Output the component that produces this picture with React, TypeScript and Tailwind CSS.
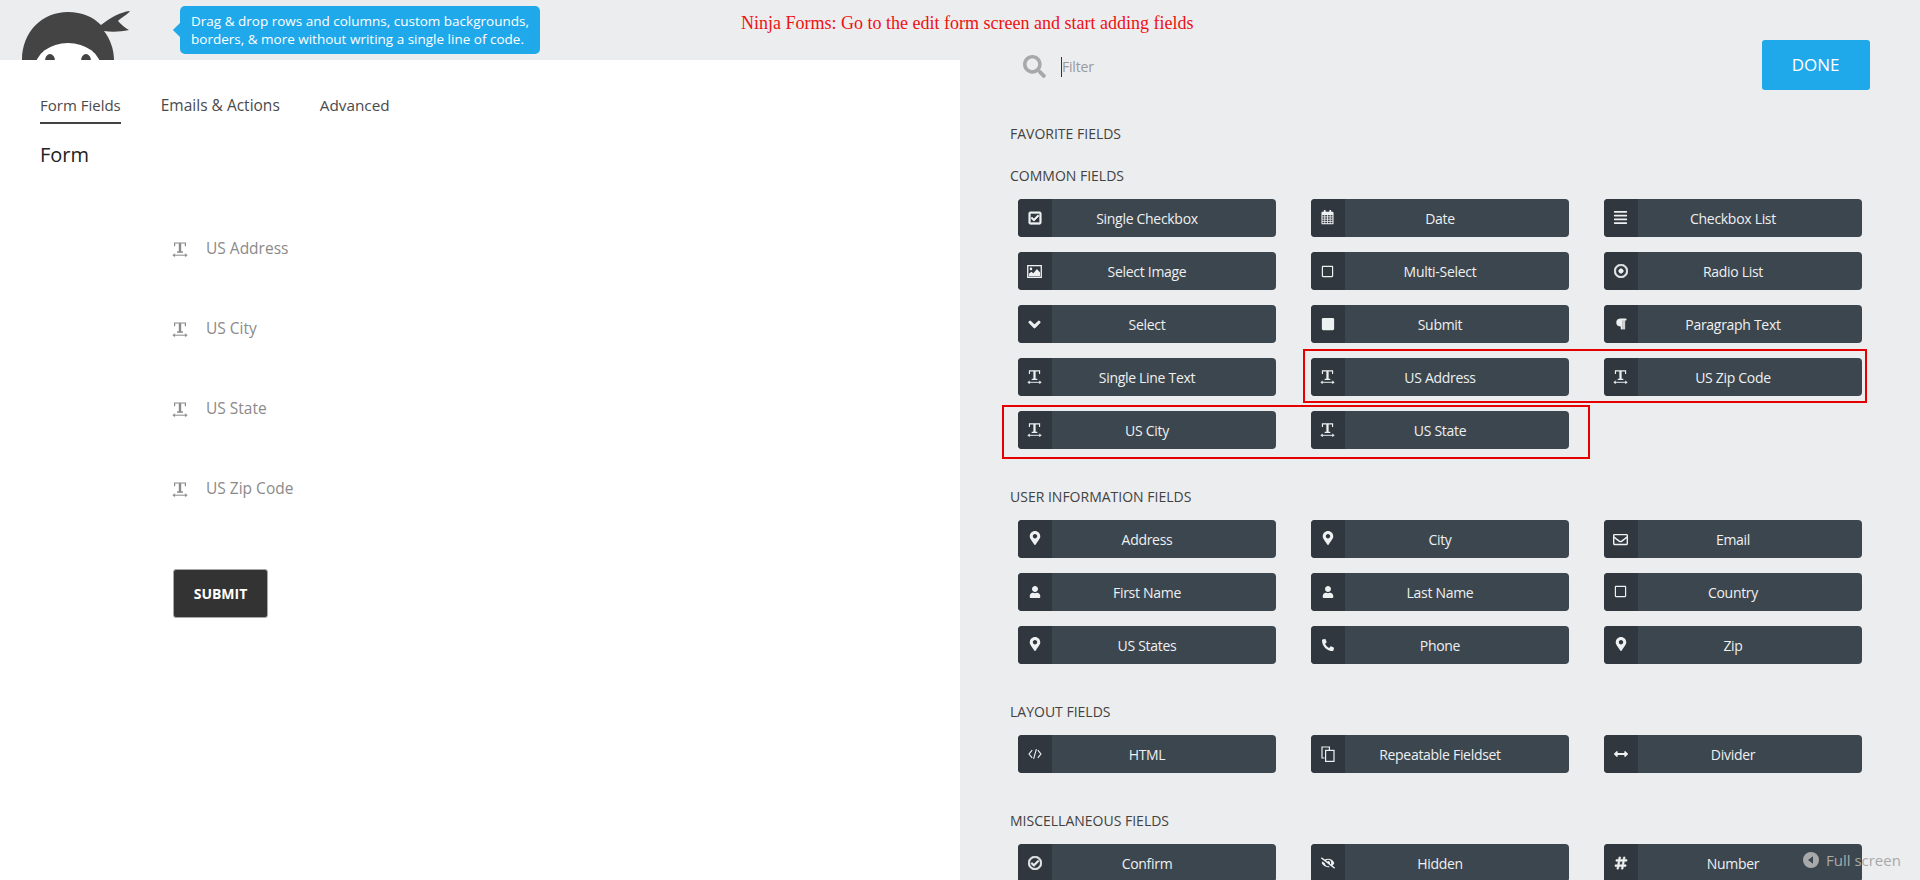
import React from "react";
import {
  FaRegCheckSquare, FaAlignJustify, FaRegSquare, FaRegDotCircle, FaChevronDown, FaSquare,
  FaParagraph, FaMapMarkerAlt, FaUser, FaPhone, FaRegEnvelope, FaArrowsAltH,
  FaRegCheckCircle, FaEyeSlash, FaHashtag, FaSearch,
} from "react-icons/fa";

function TextWidth({ className }: { className?: string }) {
  return (
    <svg viewBox="0 0 16 16" className={className} fill="none" stroke="currentColor">
      <path d="M2.6 5.2V2h10.8v3.2" strokeWidth="1.2" />
      <path d="M8 2v9.5" strokeWidth="2.4" />
      <path d="M5 11h6" strokeWidth="1.4" />
      <path d="M2 14.2h12" strokeWidth="1" />
      <path d="M0.6 14.2l2.2-1.7v3.4zM15.4 14.2l-2.2-1.7v3.4z" fill="currentColor" strokeWidth="0.3" />
    </svg>
  );
}

function Calendar({ className }: { className?: string }) {
  const cells: React.ReactNode[] = [];
  for (let r = 0; r < 4; r++) {
    for (let c = 0; c < 4; c++) {
      cells.push(<rect key={`${r}-${c}`} x={1.6 + c * 2.9} y={5.4 + r * 2.4} width="2" height="1.5" fill="#30373f" />);
    }
  }
  return (
    <svg viewBox="0 0 14 16" className={className} fill="currentColor">
      <rect x="3" y="0" width="2" height="3.4" rx="0.6" />
      <rect x="9" y="0" width="2" height="3.4" rx="0.6" />
      <rect x="0.5" y="1.8" width="13" height="13.6" rx="1" />
      {cells}
    </svg>
  );
}

function Picture({ className }: { className?: string }) {
  return (
    <svg viewBox="0 0 16 14" className={className}>
      <rect x="0.7" y="0.7" width="14.6" height="12.6" fill="none" stroke="currentColor" strokeWidth="1.4" />
      <circle cx="4.2" cy="4.2" r="1.4" fill="currentColor" />
      <path d="M2 12V9.4l2.6-2 2.2 1.6L10.6 4.4 14 8v4z" fill="currentColor" />
    </svg>
  );
}

function CodeIcon({ className }: { className?: string }) {
  return (
    <svg viewBox="0 0 16 16" className={className} fill="none" stroke="currentColor" strokeWidth="1.3">
      <path d="M4.8 3.6L1.2 8l3.6 4.4M11.2 3.6L14.8 8l-3.6 4.4M9.6 2.4L6.4 13.6" />
    </svg>
  );
}

function Files({ className }: { className?: string }) {
  return (
    <svg viewBox="0 0 14 16" className={className} fill="none" stroke="currentColor" strokeWidth="1.2">
      <path d="M3.6 12H1V1h7.4v3.4" />
      <rect x="4.6" y="4.4" width="8.4" height="11" />
    </svg>
  );
}

function BackCircle({ className }: { className?: string }) {
  return (
    <svg viewBox="0 0 16 16" className={className} fill="currentColor">
      <path fillRule="evenodd" d="M8 0a8 8 0 1 1 0 16A8 8 0 0 1 8 0zM10 4.2L5 8l5 3.8z" />
    </svg>
  );
}

type Item = [string, React.ComponentType<{ className?: string }>, string?];

const pin = "w-[14px] h-[14px] mb-[2px]";
const tw = "w-[15px] h-[15px] -mt-[1px]";

const common: Item[] = [
  ["Single Checkbox", FaRegCheckSquare, "w-[14px] h-[14px] stroke-[30] -mt-[1px]"],
  ["Date", Calendar, "w-[13px] h-[15px] -mt-[1px]"],
  ["Checkbox List", FaAlignJustify, "w-[15px] h-[15px] -mt-[1px]"],
  ["Select Image", Picture, "w-[15px] h-[13px]"],
  ["Multi-Select", FaRegSquare, "w-[13px] h-[13px]"],
  ["Radio List", FaRegDotCircle, "w-[14px] h-[14px] stroke-[30]"],
  ["Select", FaChevronDown, "w-[13px] h-[13px] stroke-[40]"],
  ["Submit", FaSquare],
  ["Paragraph Text", FaParagraph, "w-[12px] h-[12px] stroke-[20]"],
  ["Single Line Text", TextWidth, tw],
  ["US Address", TextWidth, tw],
  ["US Zip Code", TextWidth, tw],
  ["US City", TextWidth, tw],
  ["US State", TextWidth, tw],
];
const user: Item[] = [
  ["Address", FaMapMarkerAlt, pin],
  ["City", FaMapMarkerAlt, pin],
  ["Email", FaRegEnvelope, "w-[15px] h-[15px]"],
  ["First Name", FaUser, "w-[12px] h-[12px] -mt-[1px]"],
  ["Last Name", FaUser, "w-[12px] h-[12px] -mt-[1px]"],
  ["Country", FaRegSquare, "w-[13px] h-[13px] -mt-[1px]"],
  ["US States", FaMapMarkerAlt, pin],
  ["Phone", FaPhone, "w-[12px] h-[12px] -scale-x-100 -mt-[1px]"],
  ["Zip", FaMapMarkerAlt, pin],
];
const layout: Item[] = [
  ["HTML", CodeIcon],
  ["Repeatable Fieldset", Files, "w-[14px] h-[16px] -mt-[1px]"],
  ["Divider", FaArrowsAltH],
];
const misc: Item[] = [
  ["Confirm", FaRegCheckCircle, "w-[14px] h-[14px] stroke-[30]"],
  ["Hidden", FaEyeSlash],
  ["Number", FaHashtag, "w-[14px] h-[14px] stroke-[20]"],
];

function FieldButton({ item }: { item: Item }) {
  const [label, Icon, size] = item;
  return (
    <div className="flex h-[38px] w-[258px] overflow-hidden rounded-[4px] bg-[#3c464e] text-[14px] tracking-[-0.3px] text-[#eef0f1]">
      <div className="flex w-[34px] shrink-0 items-center justify-center bg-[#30373f] pr-[1px]">
        <Icon className={size ?? "w-[14px] h-[14px]"} />
      </div>
      <div className="flex flex-1 items-center justify-center pr-[34px]">{label}</div>
    </div>
  );
}

function Section({ title, items, className }: { title: string; items: Item[]; className?: string }) {
  return (
    <section className={className}>
      <h3 className="mb-[13px] h-5 text-[14px] font-medium leading-5 uppercase text-[#424242]">{title}</h3>
      <div className="ml-2 grid grid-cols-[258px_258px_258px] gap-x-[35px] gap-y-[15px]">
        {items.map((it) => (
          <FieldButton key={it[0]} item={it} />
        ))}
      </div>
    </section>
  );
}

function Logo() {
  return (
    <svg viewBox="0 0 140 60" className="h-[60px] w-[140px] shrink-0">
      <path d="M22 60C22 32 42 12 68 12c14 0 25 5 33 13 9-7 19-13 29-14-2 3-9 7-12 10 3 3 7 7 11 9-9 2-18 2-25 1 6 8 10 18 10 29z" fill="#444444" />
      <ellipse cx="68" cy="68" rx="33" ry="25" fill="#ffffff" />
      <ellipse cx="50" cy="61" rx="5" ry="7" fill="#444444" />
      <ellipse cx="86" cy="61" rx="5" ry="7" fill="#444444" />
    </svg>
  );
}

const fields = ["US Address", "US City", "US State", "US Zip Code"];

export default function App() {
  return (
    <div className="relative flex h-[880px] w-[1920px] overflow-hidden bg-[#ecedef] font-['Open_Sans',sans-serif]">
      <div className="flex w-[960px] shrink-0 flex-col">
        <header className="flex h-[60px] shrink-0 items-start overflow-hidden">
          <Logo />
          <div className="relative ml-10 mt-[6px] h-[48px] w-[360px] rounded-[5px] bg-[#1fa9ea] pl-[11px] pt-[6px] text-[13.5px] leading-[18px] text-white">
            <span className="absolute left-[-5px] top-[19px] h-[10px] w-[10px] rotate-45 bg-[#1fa9ea]" />
            Drag &amp; drop rows and columns, custom backgrounds,
            <br />
            borders, &amp; more without writing a single line of code.
          </div>
        </header>
        <main className="flex-1 bg-white pl-10 pt-[34px]">
          <nav className="flex text-[15px] leading-[22px] text-[#4a4a4a]">
            <span className="h-[30px] border-b-2 border-[#424242]">Form Fields</span>
            <span className="ml-10 w-[119px] text-[15.5px]">Emails &amp; Actions</span>
            <span className="ml-10 text-[15.3px]">Advanced</span>
          </nav>
          <h2 className="mt-[17px] text-[20px] leading-7 text-[#222222]">Form</h2>
          <div className="ml-[132px] mt-[68px] flex flex-col gap-14">
            {fields.map((f) => (
              <div key={f} className="flex h-6 items-center text-[15.5px] text-[#8a8a8a]">
                <TextWidth className="h-4 w-4" />
                <span className="ml-[18px]">{f}</span>
              </div>
            ))}
          </div>
          <button className="ml-[133px] mt-[68px] h-[49px] w-[95px] rounded-[3px] border border-[#a8a8a8] bg-[#333333] text-[14px] font-bold text-white">
            SUBMIT
          </button>
        </main>
      </div>

      <div className="flex-1 pl-[50px] pt-10">
        <div className="flex h-[50px] items-start">
          <div className="mt-[15px] flex items-center">
            <FaSearch className="ml-[13px] h-[23px] w-[23px] text-[#a9a9a9]" />
            <div className="ml-[15px] h-5 w-px bg-[#333333]" />
            <span className="text-[14px] tracking-[-0.2px] text-[#9a9a9a]">Filter</span>
          </div>
          <button className="ml-[668px] h-[50px] w-[108px] rounded-[3px] bg-[#1fa9ea] text-[17px] text-white">DONE</button>
        </div>
        <h3 className="mt-[34px] h-5 text-[14px] font-medium leading-5 uppercase text-[#424242]">Favorite Fields</h3>
        <Section title="Common Fields" items={common} className="mt-[22px]" />
        <Section title="User Information Fields" items={user} className="mt-[38px]" />
        <Section title="Layout Fields" items={layout} className="mt-[38px]" />
        <Section title="Miscellaneous Fields" items={misc} className="mt-[38px]" />
      </div>

      <div className="absolute left-[741px] top-[13px] whitespace-nowrap font-['Liberation_Serif',serif] text-[18px] leading-[20px] text-[#ee1111]">
        Ninja Forms: Go to the edit form screen and start adding fields
      </div>
      <div className="pointer-events-none absolute left-[1303px] top-[349px] h-[54px] w-[564px] border-2 border-[#e60000]" />
      <div className="pointer-events-none absolute left-[1002px] top-[405px] h-[54px] w-[588px] border-2 border-[#e60000]" />
      <div className="absolute left-[1803px] top-[851px] flex items-center gap-[7px] text-[15px] leading-[18px] text-[#a9a9a9]">
        <BackCircle className="h-4 w-4" />
        <span>Full screen</span>
      </div>
    </div>
  );
}
